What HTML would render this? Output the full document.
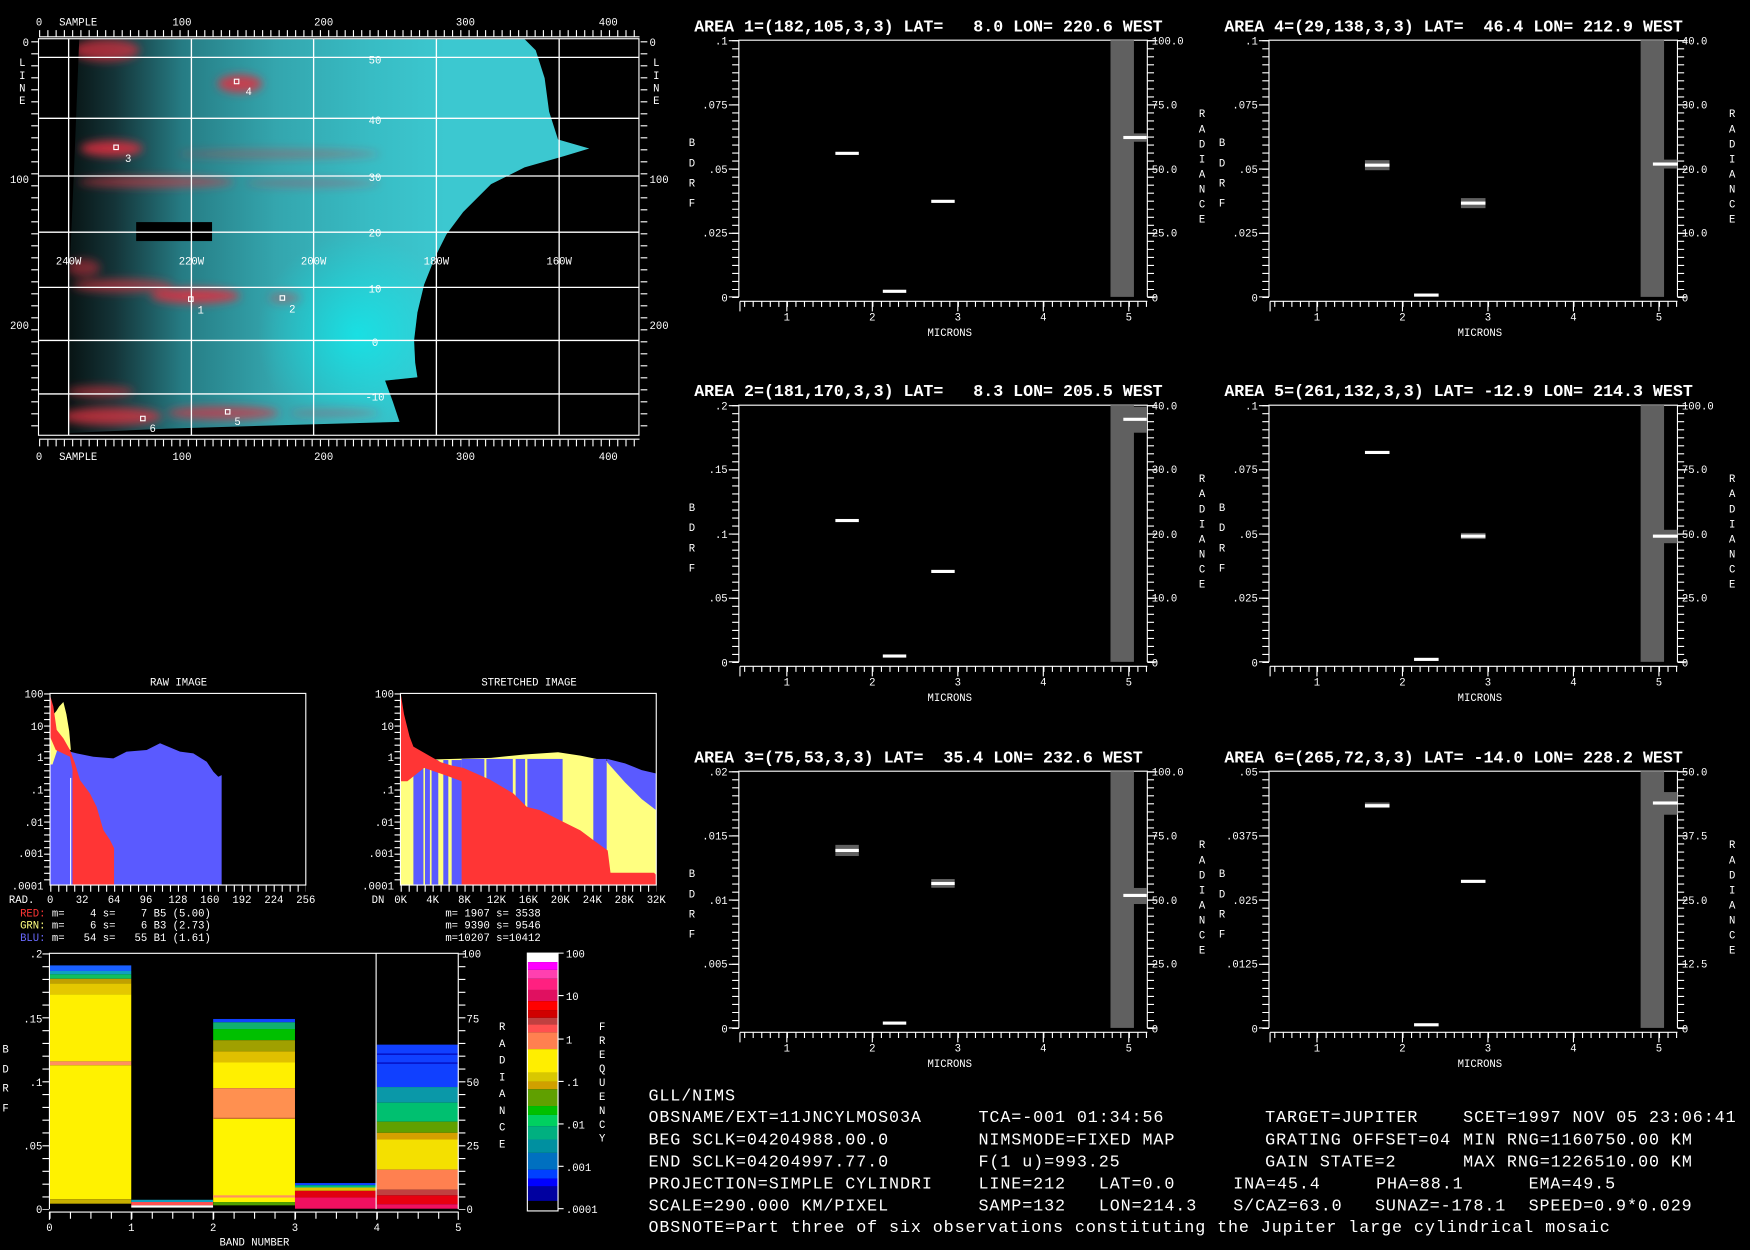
<!DOCTYPE html>
<html><head><meta charset="utf-8"><style>
html,body{margin:0;padding:0;background:#000;overflow:hidden}
svg{display:block}
text{font-family:"Liberation Mono",monospace;fill:#fff}
.s{font-size:9.5px}
.ti{font-size:14.9px;font-weight:bold}
.b{font-size:15px;letter-spacing:0.8px}
.pre{white-space:pre}
</style></head><body>
<svg width="1750" height="1250" viewBox="0 0 1568 1120" xmlns="http://www.w3.org/2000/svg">
<defs>
<linearGradient id="cy" x1="62" y1="0" x2="400" y2="0" gradientUnits="userSpaceOnUse">
<stop offset="0" stop-color="#081414"/><stop offset="0.12" stop-color="#143438"/><stop offset="0.3" stop-color="#267c84"/><stop offset="0.55" stop-color="#34a6ae"/><stop offset="0.8" stop-color="#38bcc4"/><stop offset="1" stop-color="#3cc8d0"/>
</linearGradient>
<radialGradient id="br" cx="320" cy="300" r="90" gradientUnits="userSpaceOnUse"><stop offset="0" stop-color="#00ffff" stop-opacity="0.55"/><stop offset="1" stop-color="#00ffff" stop-opacity="0"/></radialGradient>
<clipPath id="dc"><path d="M71 35H470L480 45L488 70L492 100L500 125L528 133L505 140L470 150L440 165L415 190L400 210L390 230L380 255L374 280L371 305L372 325L374 338L345 341L352 360L358 378L250 381L150 384L62 388L62 250L66 160Z"/></clipPath>
<filter id="bl" x="-50%" y="-50%" width="200%" height="200%"><feGaussianBlur stdDeviation="4"/></filter>
<g id="pf">
<path d="M662 266V36H1028V266" stroke="#fff" fill="none"/>
<rect x="995" y="36" width="21" height="230" fill="#606060"/>
<line x1="659" y1="36" x2="659" y2="267" stroke="#fff" stroke-width="6" stroke-dasharray="1 6.19"/>
<path d="M653 36.5H662M653 94H662M653 151.5H662M653 209H662M653 266H662M1028 36.5H1037M1028 94H1037M1028 151.5H1037M1028 209H1037M1028 266H1037" stroke="#fff"/>
<line x1="1031" y1="36" x2="1031" y2="267" stroke="#fff" stroke-width="6" stroke-dasharray="1 6.19"/>
<path d="M663 270H1028" stroke="#fff"/>
<line x1="666.7" y1="272.5" x2="1028" y2="272.5" stroke="#fff" stroke-width="5" stroke-dasharray="1 6.66"/>
<path d="M705 270V279M781.6 270V279M858.2 270V279M934.8 270V279M1011.4 270V279M663 270V279" stroke="#fff"/>
<text class="s" x="705" y="287" text-anchor="middle">1</text><text class="s" x="781.6" y="287" text-anchor="middle">2</text><text class="s" x="858.2" y="287" text-anchor="middle">3</text><text class="s" x="934.8" y="287" text-anchor="middle">4</text><text class="s" x="1011.4" y="287" text-anchor="middle">5</text>
<text class="s" x="851" y="301" text-anchor="middle">MICRONS</text>
<text class="s" x="620" y="131" text-anchor="middle">B</text><text class="s" x="620" y="149" text-anchor="middle">D</text><text class="s" x="620" y="167" text-anchor="middle">R</text><text class="s" x="620" y="185" text-anchor="middle">F</text>
<g text-anchor="middle"><text class="s" x="1077" y="105">R</text><text class="s" x="1077" y="118.5">A</text><text class="s" x="1077" y="132">D</text><text class="s" x="1077" y="145.5">I</text><text class="s" x="1077" y="159">A</text><text class="s" x="1077" y="172.5">N</text><text class="s" x="1077" y="186">C</text><text class="s" x="1077" y="199.5">E</text></g>
</g>
</defs>
<rect width="1568" height="1120" fill="#000"/>

<!-- IMAGE PANEL -->
<g clip-path="url(#dc)">
<rect x="60" y="34" width="480" height="360" fill="url(#cy)"/>
<rect x="60" y="34" width="480" height="360" fill="url(#br)"/>
<g filter="url(#bl)" fill="#e03040">
<ellipse cx="95" cy="45" rx="30" ry="10" opacity="0.7"/>
<ellipse cx="215" cy="75" rx="20" ry="8" opacity="0.85"/>
<ellipse cx="100" cy="133" rx="28" ry="7" opacity="0.85"/>
<ellipse cx="250" cy="138" rx="90" ry="4" opacity="0.35"/>
<ellipse cx="140" cy="163" rx="70" ry="5" opacity="0.6"/>
<ellipse cx="280" cy="164" rx="60" ry="4" opacity="0.3"/>
<ellipse cx="75" cy="240" rx="15" ry="8" opacity="0.5"/>
<ellipse cx="110" cy="256" rx="45" ry="6" opacity="0.6"/>
<ellipse cx="175" cy="265" rx="40" ry="7" opacity="0.85"/>
<ellipse cx="255" cy="267" rx="14" ry="5" opacity="0.4"/>
<ellipse cx="90" cy="351" rx="30" ry="5" opacity="0.6"/>
<ellipse cx="100" cy="373" rx="45" ry="8" opacity="0.75"/>
<ellipse cx="200" cy="370" rx="50" ry="6" opacity="0.7"/>
<ellipse cx="300" cy="370" rx="40" ry="4" opacity="0.3"/>
</g>
</g>
<rect x="122" y="199" width="68" height="17" fill="#000"/>
<g stroke="#fff" fill="none">
<rect x="34.5" y="34.7" width="538" height="355.3"/>
<path d="M35 51.4H573M35 106H573M35 157.7H573M35 208H573M35 257.5H573M35 305H573M35 353H573M61.5 35V390M171.5 35V390M281 35V390M391 35V390M501 35V390" stroke-width="1.2"/>
<line x1="35" y1="30" x2="573" y2="30" stroke-width="6" stroke-dasharray="1 6.4"/>
<path d="M35 33H573M35 393.5H573"/>
<line x1="35" y1="397" x2="573" y2="397" stroke-width="6" stroke-dasharray="1 6.4"/>
<line x1="31" y1="37" x2="31" y2="390" stroke-width="6" stroke-dasharray="1 9.75"/>
<line x1="577" y1="37" x2="577" y2="390" stroke-width="6" stroke-dasharray="1 9.75"/>
<rect x="102" y="130" width="4" height="4"/><rect x="210" y="71" width="4" height="4"/><rect x="169" y="266" width="4" height="4"/><rect x="251" y="265" width="4" height="4"/><rect x="202" y="367" width="4" height="4"/><rect x="126" y="373" width="4" height="4"/>
</g>
<g class="s">
<text class="s" x="112" y="145">3</text><text class="s" x="220" y="85">4</text><text class="s" x="177" y="281">1</text><text class="s" x="259" y="280">2</text><text class="s" x="210" y="381">5</text><text class="s" x="134" y="387">6</text>
</g>
<g text-anchor="middle" fill="#ddd">
<text class="s" x="336" y="57">50</text><text class="s" x="336" y="111">40</text><text class="s" x="336" y="162">30</text><text class="s" x="336" y="212">20</text><text class="s" x="336" y="262">10</text><text class="s" x="336" y="310">0</text><text class="s" x="336" y="359">-10</text>
<text class="s" x="61.5" y="237">240W</text><text class="s" x="171.5" y="237">220W</text><text class="s" x="281" y="237">200W</text><text class="s" x="391" y="237">180W</text><text class="s" x="501" y="237">160W</text>
</g>
<text class="s" x="35" y="23" text-anchor="middle">0</text><text class="s" x="53" y="23">SAMPLE</text><text class="s" x="163" y="23" text-anchor="middle">100</text><text class="s" x="290" y="23" text-anchor="middle">200</text><text class="s" x="417" y="23" text-anchor="middle">300</text><text class="s" x="545" y="23" text-anchor="middle">400</text>
<text class="s" x="35" y="412" text-anchor="middle">0</text><text class="s" x="53" y="412">SAMPLE</text><text class="s" x="163" y="412" text-anchor="middle">100</text><text class="s" x="290" y="412" text-anchor="middle">200</text><text class="s" x="417" y="412" text-anchor="middle">300</text><text class="s" x="545" y="412" text-anchor="middle">400</text>
<text class="s" x="26" y="41" text-anchor="end">0</text><text class="s" x="26" y="164" text-anchor="end">100</text><text class="s" x="26" y="295" text-anchor="end">200</text>
<text class="s" x="582" y="41">0</text><text class="s" x="582" y="164">100</text><text class="s" x="582" y="295">200</text>
<g text-anchor="middle"><text class="s" x="20" y="59">L</text><text class="s" x="20" y="71">I</text><text class="s" x="20" y="82">N</text><text class="s" x="20" y="93">E</text>
<text class="s" x="588" y="59">L</text><text class="s" x="588" y="71">I</text><text class="s" x="588" y="82">N</text><text class="s" x="588" y="93">E</text></g>

<!-- SPECTRUM PANELS -->
<use href="#pf"/>
<use href="#pf" transform="translate(475,0)"/>
<use href="#pf" transform="translate(0,327)"/>
<use href="#pf" transform="translate(475,327)"/>
<use href="#pf" transform="translate(0,655)"/>
<use href="#pf" transform="translate(475,655)"/>

<g>
<text class="ti pre" x="622" y="28">AREA 1=(182,105,3,3) LAT=   8.0 LON= 220.6 WEST</text>
<text class="ti pre" x="1097" y="28">AREA 4=(29,138,3,3) LAT=  46.4 LON= 212.9 WEST</text>
<text class="ti pre" x="622" y="355">AREA 2=(181,170,3,3) LAT=   8.3 LON= 205.5 WEST</text>
<text class="ti pre" x="1097" y="355">AREA 5=(261,132,3,3) LAT= -12.9 LON= 214.3 WEST</text>
<text class="ti pre" x="622" y="683">AREA 3=(75,53,3,3) LAT=  35.4 LON= 232.6 WEST</text>
<text class="ti pre" x="1097" y="683">AREA 6=(265,72,3,3) LAT= -14.0 LON= 228.2 WEST</text>
</g>

<!-- y labels -->
<g text-anchor="end">
<text class="s" x="652" y="40">.1</text><text class="s" x="652" y="97">.075</text><text class="s" x="652" y="155">.05</text><text class="s" x="652" y="212">.025</text><text class="s" x="652" y="270">0</text>
<text class="s" x="1127" y="40">.1</text><text class="s" x="1127" y="97">.075</text><text class="s" x="1127" y="155">.05</text><text class="s" x="1127" y="212">.025</text><text class="s" x="1127" y="270">0</text>
<text class="s" x="652" y="367">.2</text><text class="s" x="652" y="424">.15</text><text class="s" x="652" y="482">.1</text><text class="s" x="652" y="539">.05</text><text class="s" x="652" y="597">0</text>
<text class="s" x="1127" y="367">.1</text><text class="s" x="1127" y="424">.075</text><text class="s" x="1127" y="482">.05</text><text class="s" x="1127" y="539">.025</text><text class="s" x="1127" y="597">0</text>
<text class="s" x="652" y="695">.02</text><text class="s" x="652" y="752">.015</text><text class="s" x="652" y="810">.01</text><text class="s" x="652" y="867">.005</text><text class="s" x="652" y="925">0</text>
<text class="s" x="1127" y="695">.05</text><text class="s" x="1127" y="752">.0375</text><text class="s" x="1127" y="810">.025</text><text class="s" x="1127" y="867">.0125</text><text class="s" x="1127" y="925">0</text>
</g>
<g>
<text class="s" x="1032" y="40">100.0</text><text class="s" x="1032" y="97">75.0</text><text class="s" x="1032" y="155">50.0</text><text class="s" x="1032" y="212">25.0</text><text class="s" x="1032" y="270">0</text>
<text class="s" x="1507" y="40">40.0</text><text class="s" x="1507" y="97">30.0</text><text class="s" x="1507" y="155">20.0</text><text class="s" x="1507" y="212">10.0</text><text class="s" x="1507" y="270">0</text>
<text class="s" x="1032" y="367">40.0</text><text class="s" x="1032" y="424">30.0</text><text class="s" x="1032" y="482">20.0</text><text class="s" x="1032" y="539">10.0</text><text class="s" x="1032" y="597">0</text>
<text class="s" x="1507" y="367">100.0</text><text class="s" x="1507" y="424">75.0</text><text class="s" x="1507" y="482">50.0</text><text class="s" x="1507" y="539">25.0</text><text class="s" x="1507" y="597">0</text>
<text class="s" x="1032" y="695">100.0</text><text class="s" x="1032" y="752">75.0</text><text class="s" x="1032" y="810">50.0</text><text class="s" x="1032" y="867">25.0</text><text class="s" x="1032" y="925">0</text>
<text class="s" x="1507" y="695">50.0</text><text class="s" x="1507" y="752">37.5</text><text class="s" x="1507" y="810">25.0</text><text class="s" x="1507" y="867">12.5</text><text class="s" x="1507" y="925">0</text>
</g>

<!-- dashes -->
<g fill="#606060">
<rect x="1006.5" y="119.5" width="21" height="7.5"/>
<rect x="1223" y="143.5" width="22" height="9"/><rect x="1309" y="177.5" width="22" height="9"/><rect x="1481" y="143" width="22" height="8"/>
<rect x="1006.5" y="364.4" width="21" height="23.3"/>
<rect x="1309" y="477.5" width="22" height="5.5"/><rect x="1481" y="474.7" width="22" height="12"/>
<rect x="748.5" y="757" width="21" height="10"/><rect x="834.4" y="787.6" width="21" height="7.8"/><rect x="1006.5" y="795.6" width="21" height="14.4"/>
<rect x="1223" y="719" width="22" height="5"/><rect x="1481" y="709.7" width="22" height="20.3"/>
</g>
<g fill="#fff">
<rect x="748.5" y="136" width="21" height="2.8"/><rect x="791" y="259.6" width="21" height="2.8"/><rect x="834.4" y="179" width="21" height="2.8"/><rect x="1006.5" y="121.8" width="21" height="2.8"/>
<rect x="1223" y="146.6" width="22" height="2.8"/><rect x="1267" y="263" width="22" height="2.8"/><rect x="1309" y="180.6" width="22" height="2.8"/><rect x="1481" y="145.6" width="22" height="2.8"/>
<rect x="748.5" y="465" width="21" height="2.8"/><rect x="791" y="586.4" width="21" height="2.8"/><rect x="834.4" y="510.6" width="21" height="2.8"/><rect x="1006.5" y="374.3" width="21" height="2.8"/>
<rect x="1223" y="404" width="22" height="2.8"/><rect x="1267" y="589.4" width="22" height="2.8"/><rect x="1309" y="479" width="22" height="2.8"/><rect x="1481" y="479" width="22" height="2.8"/>
<rect x="748.5" y="760.6" width="21" height="2.8"/><rect x="791" y="915.3" width="21" height="2.8"/><rect x="834.4" y="790.2" width="21" height="2.8"/><rect x="1006.5" y="800.9" width="21" height="2.8"/>
<rect x="1223" y="720.5" width="22" height="2.8"/><rect x="1267" y="916.8" width="22" height="2.8"/><rect x="1309" y="788.3" width="22" height="2.8"/><rect x="1481" y="718.1" width="22" height="2.8"/>
</g>

<!-- RAW HISTOGRAM -->
<text class="s" x="160" y="614" text-anchor="middle">RAW IMAGE</text>
<path d="M44.8 685.5L47.8 673.5L53.8 670.5L62.7 673.5L68.7 675L83.6 678L101.6 679.5L113.5 673.5L131.4 672L143.4 666L161.3 673.5L173.2 675L185.2 682.5L191.2 691.5L195.6 696L198.6 694.5V793H44.8Z" fill="#5a5aff"/>
<path d="M44.8 636L48 640L50.5 637L53 633L56.8 629L59.5 640L62 655L63.5 672L52 670L47 685L44.8 685Z" fill="#ffff80"/>
<path d="M44.8 622.7L47.8 633L50.8 654L56.8 661.6L62.7 672L67.2 684L71.7 699L80.6 711L86.6 723L92.6 743.7L98.6 752.7L102.2 760V793H65V690L62.7 678L50 672L44.8 660Z" fill="#ff3535"/>
<path d="M63.3 697V793" stroke="#fff"/>
<g stroke="#fff" fill="none">
<rect x="44.8" y="621.3" width="229.2" height="171.7"/>
<line x1="42" y1="621.3" x2="42" y2="793" stroke-width="5" stroke-dasharray="1 4.74"/>
<line x1="45" y1="796" x2="274" y2="796" stroke-width="6" stroke-dasharray="1 6.15"/>
<line x1="356" y1="621.3" x2="356" y2="793" stroke-width="5" stroke-dasharray="1 4.74"/>
<line x1="359" y1="796" x2="588" y2="796" stroke-width="6" stroke-dasharray="1 6.15"/>
</g>
<g text-anchor="end"><text class="s" x="39" y="625">100</text><text class="s" x="39" y="654">10</text><text class="s" x="39" y="682">1</text><text class="s" x="39" y="711">.1</text><text class="s" x="39" y="740">.01</text><text class="s" x="39" y="768">.001</text><text class="s" x="39" y="797">.0001</text>
<text class="s" x="353" y="625">100</text><text class="s" x="353" y="654">10</text><text class="s" x="353" y="682">1</text><text class="s" x="353" y="711">.1</text><text class="s" x="353" y="740">.01</text><text class="s" x="353" y="768">.001</text><text class="s" x="353" y="797">.0001</text></g>
<text class="s" x="8" y="809">RAD.</text>
<g text-anchor="middle"><text class="s" x="45" y="809">0</text><text class="s" x="73.6" y="809">32</text><text class="s" x="102.2" y="809">64</text><text class="s" x="130.8" y="809">96</text><text class="s" x="159.4" y="809">128</text><text class="s" x="188" y="809">160</text><text class="s" x="216.8" y="809">192</text><text class="s" x="245.4" y="809">224</text><text class="s" x="274" y="809">256</text>
<text class="s" x="359" y="809">0K</text><text class="s" x="387.6" y="809">4K</text><text class="s" x="416.2" y="809">8K</text><text class="s" x="444.8" y="809">12K</text><text class="s" x="473.5" y="809">16K</text><text class="s" x="502" y="809">20K</text><text class="s" x="530.7" y="809">24K</text><text class="s" x="559.3" y="809">28K</text><text class="s" x="588" y="809">32K</text></g>
<text class="s" x="333" y="809">DN</text>
<g fill="#ddd">
<text class="s pre" x="18" y="821"><tspan fill="#ff3535">RED:</tspan> m=    4 s=    7 B5 (5.00)</text>
<text class="s pre" x="18" y="832"><tspan fill="#ffff80">GRN:</tspan> m=    6 s=    6 B3 (2.73)</text>
<text class="s pre" x="18" y="843"><tspan fill="#6a6aff">BLU:</tspan> m=   54 s=   55 B1 (1.61)</text>
<text class="s pre" x="399" y="821">m= 1907 s= 3538</text>
<text class="s pre" x="399" y="832">m= 9390 s= 9546</text>
<text class="s pre" x="399" y="843">m=10207 s=10412</text>
</g>

<!-- STRETCHED -->
<text class="s" x="474" y="614" text-anchor="middle">STRETCHED IMAGE</text>
<path d="M359 793V690L370 681L440 679L470 676L500 674L520 677L544 682L560 700L575 715L588 725V793Z" fill="#ffff80"/>
<g fill="#5a5aff">
<rect x="370.4" y="681" width="9" height="112"/><rect x="380.8" y="681" width="4.4" height="112"/><rect x="386.7" y="681" width="6" height="112"/><rect x="397.2" y="681" width="4.5" height="112"/><rect x="404.7" y="681" width="9" height="112"/>
<rect x="413.6" y="680" width="90.5" height="113"/><rect x="531.6" y="680" width="12" height="113"/>
<path d="M544 680L560 684L575 690L588 693V726L575 716L560 701L544 683Z"/>
</g>
<g fill="#ffff80"><rect x="434" y="680" width="1.8" height="30"/><rect x="459.5" y="680" width="2.5" height="35"/><rect x="470.5" y="680" width="2" height="45"/></g>
<path d="M359 621L362 640L367 660L370.4 669L388 679L395 683L405 686L415.1 688L439 698.5L460 711L472 723L484 726L502 735L520 744L532 753L544.5 762L547 782L586 782L588 784V793H413.6V700L400 695L380 688L365 700L359 700Z" fill="#ff3535"/>
<rect x="358.8" y="621.3" width="229.2" height="171.7" stroke="#fff" fill="none"/>

<!-- BAND PLOT -->
<g>
<rect x="44.3" y="865" width="73.3" height="5" fill="#1a60ff"/><rect x="44.3" y="870" width="73.3" height="3" fill="#10a0c0"/><rect x="44.3" y="873" width="73.3" height="4" fill="#10c060"/><rect x="44.3" y="877" width="73.3" height="4" fill="#c0a000"/><rect x="44.3" y="881" width="73.3" height="10" fill="#e4c800"/><rect x="44.3" y="891" width="73.3" height="60" fill="#fff000"/><rect x="44.3" y="951" width="73.3" height="3.5" fill="#ff9060"/><rect x="44.3" y="954.5" width="73.3" height="120" fill="#fff200"/><rect x="44.3" y="1074.5" width="73.3" height="4" fill="#c8b000"/>
<rect x="117.6" y="1075" width="73.3" height="2" fill="#10a0c0"/><rect x="117.6" y="1077" width="73.3" height="3" fill="#ff5050"/><rect x="117.6" y="1080" width="73.3" height="2" fill="#fff"/>
<rect x="191" y="913" width="73.3" height="3" fill="#1040ff"/><rect x="191" y="916" width="73.3" height="6" fill="#10b070"/><rect x="191" y="922" width="73.3" height="10" fill="#00c000"/><rect x="191" y="932" width="73.3" height="10" fill="#a0a000"/><rect x="191" y="942" width="73.3" height="10" fill="#e0c000"/><rect x="191" y="952" width="73.3" height="23" fill="#fff000"/><rect x="191" y="975" width="73.3" height="27" fill="#ff9050"/><rect x="191" y="1002" width="73.3" height="75" fill="#fff400"/><rect x="191" y="1001.5" width="73.3" height="1" fill="#c06030"/><rect x="191" y="1071" width="73.3" height="2" fill="#ff9060"/><rect x="191" y="1077" width="73.3" height="3" fill="#50a000"/>
<rect x="264.3" y="1060" width="73.3" height="2" fill="#1040ff"/><rect x="264.3" y="1062" width="73.3" height="2" fill="#00c080"/><rect x="264.3" y="1064" width="73.3" height="3" fill="#e0c000"/><rect x="264.3" y="1067" width="73.3" height="6" fill="#e00010"/><rect x="264.3" y="1073" width="73.3" height="10" fill="#f01060"/>
<rect x="337.6" y="936" width="73.3" height="38" fill="#1040ff"/><rect x="337.6" y="944" width="73.3" height="1" fill="#0000b0"/><rect x="337.6" y="952" width="73.3" height="1" fill="#0000b0"/><rect x="337.6" y="974" width="73.3" height="14" fill="#0a98a8"/><rect x="337.6" y="988" width="73.3" height="17" fill="#00c070"/><rect x="337.6" y="1005" width="73.3" height="10" fill="#60a000"/><rect x="337.6" y="1015" width="73.3" height="6" fill="#d4a000"/><rect x="337.6" y="1021" width="73.3" height="27" fill="#f4e000"/><rect x="337.6" y="1048" width="73.3" height="18" fill="#ff8050"/><rect x="337.6" y="1066" width="73.3" height="5" fill="#c04040"/><rect x="337.6" y="1071" width="73.3" height="8" fill="#e80010"/><rect x="337.6" y="1079" width="73.3" height="4" fill="#f01060"/>
</g>
<g stroke="#fff" fill="none">
<path d="M44.3 1083.4V854.2H410.6V1083.4M337 854.2V1083.4"/>
<line x1="41" y1="854.2" x2="41" y2="1084" stroke-width="6" stroke-dasharray="1 10.46"/>
<line x1="414" y1="854.2" x2="414" y2="1084" stroke-width="6" stroke-dasharray="1 10.46"/>
<path d="M44 1086H411"/>
<line x1="44.3" y1="1089" x2="411" y2="1089" stroke-width="6" stroke-dasharray="1 17.33"/>
<path d="M44.3 1086V1093M117.6 1086V1093M191 1086V1093M264.3 1086V1093M337.6 1086V1093M410.6 1086V1093"/>
</g>
<g text-anchor="end"><text class="s" x="38" y="858">.2</text><text class="s" x="38" y="916">.15</text><text class="s" x="38" y="973">.1</text><text class="s" x="38" y="1030">.05</text><text class="s" x="38" y="1087">0</text></g>
<g><text class="s" x="414" y="858">100</text><text class="s" x="418" y="916">75</text><text class="s" x="418" y="973">50</text><text class="s" x="418" y="1030">25</text><text class="s" x="418" y="1087">0</text></g>
<g text-anchor="middle"><text class="s" x="44.3" y="1103">0</text><text class="s" x="117.6" y="1103">1</text><text class="s" x="191" y="1103">2</text><text class="s" x="264.3" y="1103">3</text><text class="s" x="337.6" y="1103">4</text><text class="s" x="410.6" y="1103">5</text>
<text class="s" x="228" y="1116">BAND NUMBER</text>
<text class="s" x="5" y="943">B</text><text class="s" x="5" y="961">D</text><text class="s" x="5" y="978">R</text><text class="s" x="5" y="996">F</text>
<text class="s" x="450" y="923">R</text><text class="s" x="450" y="938">A</text><text class="s" x="450" y="953">D</text><text class="s" x="450" y="968">I</text><text class="s" x="450" y="983">A</text><text class="s" x="450" y="998">N</text><text class="s" x="450" y="1013">C</text><text class="s" x="450" y="1028">E</text>
<text class="s" x="539.5" y="923">F</text><text class="s" x="539.5" y="935.5">R</text><text class="s" x="539.5" y="948">E</text><text class="s" x="539.5" y="960.5">Q</text><text class="s" x="539.5" y="973">U</text><text class="s" x="539.5" y="985.5">E</text><text class="s" x="539.5" y="998">N</text><text class="s" x="539.5" y="1010.5">C</text><text class="s" x="539.5" y="1023">Y</text></g>

<!-- colour bar -->
<g>
<rect x="472.5" y="854" width="27.5" height="8" fill="#fff"/><rect x="472.5" y="862" width="27.5" height="7" fill="#ff00ff"/><rect x="472.5" y="869" width="27.5" height="8" fill="#ff40b0"/><rect x="472.5" y="877" width="27.5" height="10" fill="#ff2080"/><rect x="472.5" y="887" width="27.5" height="10" fill="#e01060"/><rect x="472.5" y="897" width="27.5" height="8" fill="#ff0000"/><rect x="472.5" y="905" width="27.5" height="7" fill="#d00000"/><rect x="472.5" y="912" width="27.5" height="6" fill="#c04040"/><rect x="472.5" y="918" width="27.5" height="7" fill="#ff5050"/><rect x="472.5" y="925" width="27.5" height="15" fill="#ff8050"/><rect x="472.5" y="940" width="27.5" height="21" fill="#ffee00"/><rect x="472.5" y="961" width="27.5" height="8" fill="#d8c800"/><rect x="472.5" y="969" width="27.5" height="7" fill="#d0a000"/><rect x="472.5" y="976" width="27.5" height="15" fill="#60a000"/><rect x="472.5" y="991" width="27.5" height="8" fill="#00c000"/><rect x="472.5" y="999" width="27.5" height="10" fill="#00d060"/><rect x="472.5" y="1009" width="27.5" height="12" fill="#00b080"/><rect x="472.5" y="1021" width="27.5" height="12" fill="#0090a0"/><rect x="472.5" y="1033" width="27.5" height="15" fill="#0070c0"/><rect x="472.5" y="1048" width="27.5" height="8" fill="#0040ff"/><rect x="472.5" y="1056" width="27.5" height="7" fill="#0000ff"/><rect x="472.5" y="1063" width="27.5" height="13" fill="#0000a0"/>
<rect x="472.5" y="854" width="27.5" height="231" stroke="#fff" fill="none"/>
<path d="M500 854H505M500 892H505M500 931H505M500 969H505M500 1007H505M500 1045H505M500 1083H505" stroke="#fff"/>
</g>
<g><text class="s" x="507" y="858">100</text><text class="s" x="507" y="896">10</text><text class="s" x="507" y="935">1</text><text class="s" x="507" y="973">.1</text><text class="s" x="507" y="1011">.01</text><text class="s" x="507" y="1049">.001</text><text class="s" x="507" y="1087">.0001</text></g>

<!-- BOTTOM INFO -->
<g class="b">
<text class="b" x="581" y="986">GLL/NIMS</text>
<text class="b" x="581" y="1005.5">OBSNAME/EXT=11JNCYLMOS03A</text><text class="b" x="876.7" y="1005.5">TCA=-001 01:34:56</text><text class="b" x="1133.6" y="1005.5">TARGET=JUPITER</text><text class="b" x="1311" y="1005.5">SCET=1997 NOV 05 23:06:41</text>
<text class="b" x="581" y="1025.5">BEG SCLK=04204988.00.0</text><text class="b" x="876.7" y="1025.5">NIMSMODE=FIXED MAP</text><text class="b" x="1133.6" y="1025.5">GRATING OFFSET=04</text><text class="b" x="1311" y="1025.5">MIN RNG=1160750.00 KM</text>
<text class="b" x="581" y="1045">END SCLK=04204997.77.0</text><text class="b" x="876.7" y="1045">F(1 u)=993.25</text><text class="b" x="1133.6" y="1045">GAIN STATE=2</text><text class="b" x="1311" y="1045">MAX RNG=1226510.00 KM</text>
<text class="b" x="581" y="1065">PROJECTION=SIMPLE CYLINDRI</text><text class="b" x="876.7" y="1065">LINE=212</text><text class="b" x="984.5" y="1065">LAT=0.0</text><text class="b" x="1105" y="1065">INA=45.4</text><text class="b" x="1233" y="1065">PHA=88.1</text><text class="b" x="1369.6" y="1065">EMA=49.5</text>
<text class="b" x="581" y="1084.5">SCALE=290.000 KM/PIXEL</text><text class="b" x="876.7" y="1084.5">SAMP=132</text><text class="b" x="984.5" y="1084.5">LON=214.3</text><text class="b" x="1105" y="1084.5">S/CAZ=63.0</text><text class="b" x="1232" y="1084.5">SUNAZ=-178.1</text><text class="b" x="1369.6" y="1084.5">SPEED=0.9*0.029</text>
<text class="b" x="581" y="1104">OBSNOTE=Part three of six observations constituting the Jupiter large cylindrical mosaic</text>
</g>
</svg>
</body></html>
